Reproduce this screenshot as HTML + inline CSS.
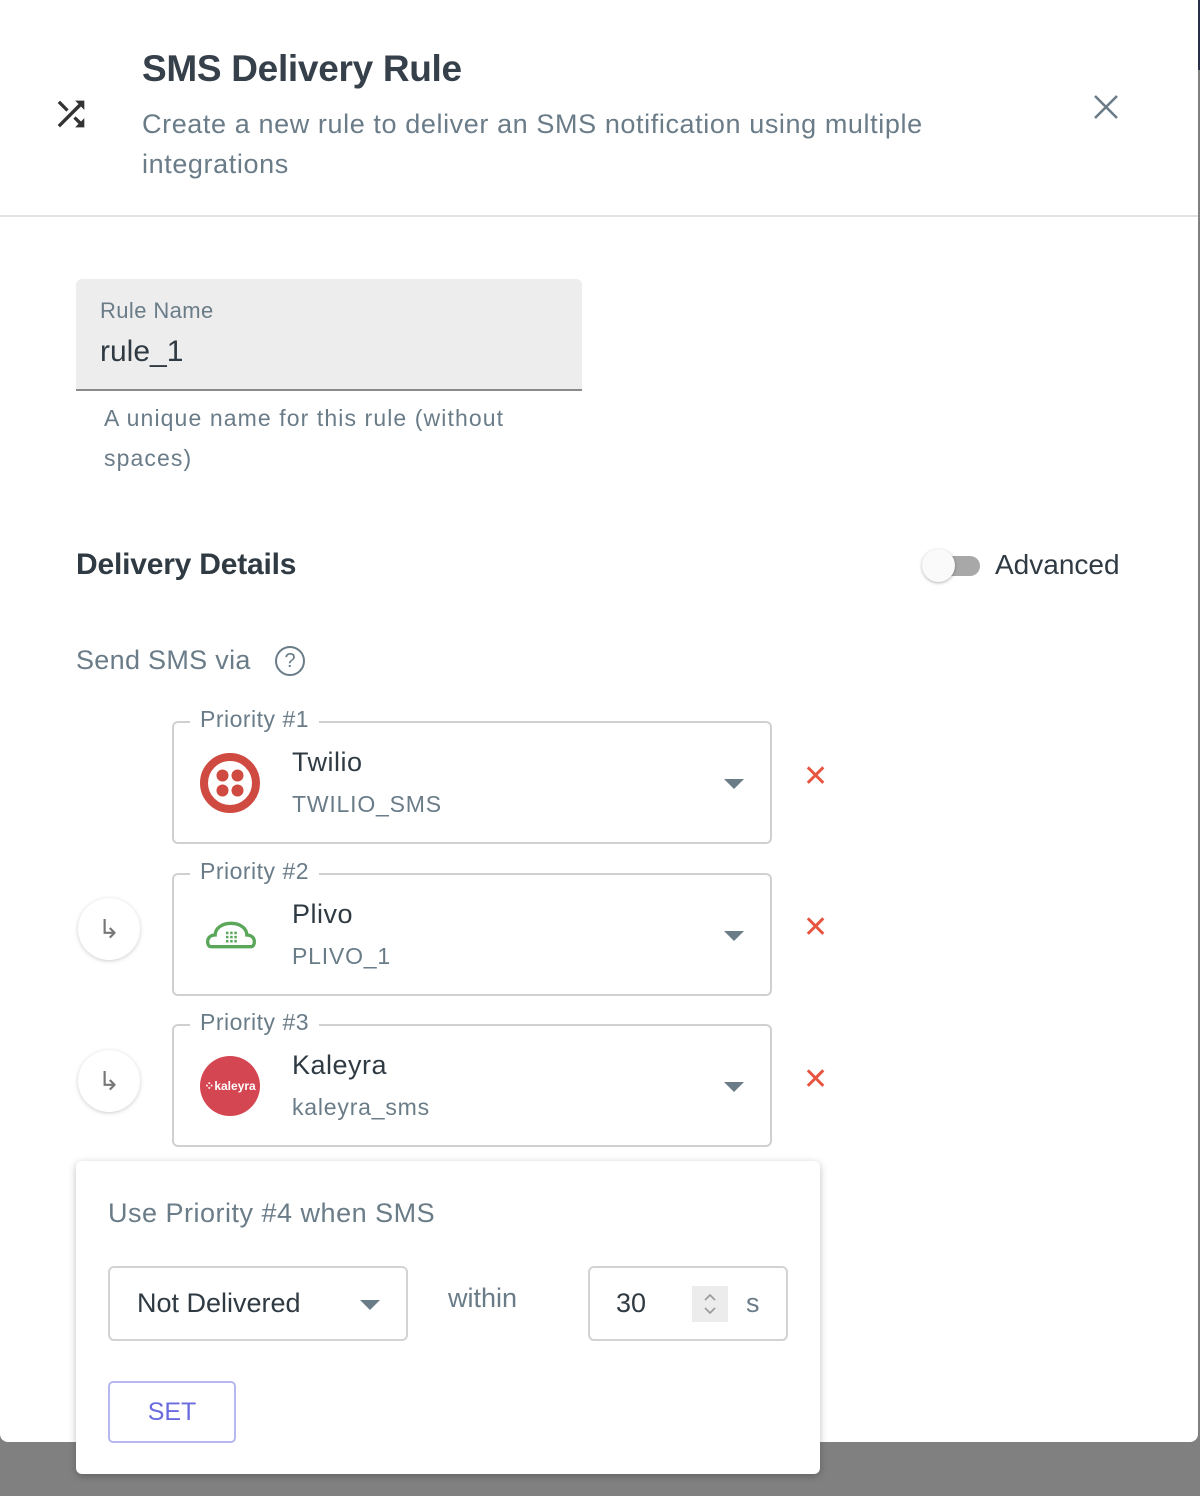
<!DOCTYPE html>
<html><head><style>
*{box-sizing:border-box;margin:0;padding:0}
body{width:1200px;height:1496px;background:#808080;font-family:"Liberation Sans",sans-serif;position:relative;overflow:hidden}
.dlg{position:absolute;left:0;top:0;width:1198px;height:1442px;background:#fff;border-radius:0 0 8px 8px}
.abs{position:absolute}
.hdr{border-bottom:2px solid #e3e3e3;height:217px;position:absolute;left:0;top:0;width:1198px}
.h1{left:142px;top:48px;font-size:37px;color:#36404a;font-weight:bold;letter-spacing:-0.3px}
.sub{left:142px;top:104px;font-size:27px;color:#6a7c88;line-height:40px;width:860px;letter-spacing:0.6px}
.field{left:76px;top:279px;width:506px;height:112px;background:#ededed;border-radius:6px 6px 0 0;border-bottom:2px solid #8a8a8a}
.prio{position:absolute;left:172px;width:600px;height:123px;border:2px solid #d0d0d0;border-radius:6px}
.prio .lg{position:absolute;left:26px;top:30px;width:60px;height:60px}
.prio .n{position:absolute;left:118px;top:24px;font-size:27px;color:#2f3a43;letter-spacing:0.5px}
.prio .c{position:absolute;left:118px;top:68px;font-size:23px;color:#6a7c88;letter-spacing:0.8px}
.prio .arr{position:absolute;right:26px;top:56px;width:0;height:0;border-left:10px solid transparent;border-right:10px solid transparent;border-top:10px solid #6a7c88}
.prio .lab{position:absolute;left:16px;top:-17px;background:#fff;padding:0 10px;font-size:23px;color:#6a7c88;letter-spacing:0.5px}
.x{position:absolute;left:803px;font-size:30px;color:#e8543f;line-height:30px}
.circ{position:absolute;left:78px;width:62px;height:62px;border-radius:50%;background:#fff;box-shadow:0 1px 4px rgba(0,0,0,.2);text-align:center;line-height:62px;font-size:26px;color:#777}
.pop{position:absolute;left:76px;top:1161px;width:744px;height:313px;background:#fff;border-radius:6px;box-shadow:0 2px 8px rgba(0,0,0,.25)}
</style></head><body>
<div class="abs" style="left:1198px;top:0;width:2px;height:70px;background:#2a2f4a"></div>
<div class="dlg">
<div class="hdr"></div>
<svg class="abs" style="left:51px;top:94px" width="40" height="40" viewBox="0 0 24 24"><path d="M10.6 9.2 5.4 4 4 5.4l5.2 5.2 1.4-1.4zM14.5 4l2 2L4 18.6 5.4 20 18 7.5l2 2V4h-5.5zm.3 9.4-1.4 1.4 3.1 3.1L14.5 20H20v-5.5l-2 2-3.2-3.1z" fill="#333"/></svg>
<div class="abs h1">SMS Delivery Rule</div>
<div class="abs sub">Create a new rule to deliver an SMS notification using multiple integrations</div>
<svg class="abs" style="left:1093px;top:94px" width="26" height="26" viewBox="0 0 26 26"><path d="M2 2L24 24M24 2L2 24" stroke="#6a7c88" stroke-width="2.6"/></svg>
<div class="abs field"><div class="abs" style="left:24px;top:19px;font-size:22px;color:#6a7c88;letter-spacing:0.4px">Rule Name</div><div class="abs" style="left:24px;top:56px;font-size:30px;color:#2f3a43">rule_1</div></div>
<div class="abs" style="left:104px;top:398px;font-size:23px;color:#6a7c88;line-height:40px;width:440px;letter-spacing:1.1px">A unique name for this rule (without spaces)</div>
<div class="abs" style="left:76px;top:548px;font-size:30px;color:#2f3a43;font-weight:bold;letter-spacing:-0.2px">Delivery Details</div>
<div class="abs" style="left:938px;top:556px;width:42px;height:20px;border-radius:10px;background:#a8a8a8"></div>
<div class="abs" style="left:922px;top:549px;width:33px;height:33px;border-radius:50%;background:#fafafa;box-shadow:0 1px 3px rgba(0,0,0,.3)"></div>
<div class="abs" style="left:995px;top:549px;font-size:28px;color:#2f3a43">Advanced</div>
<div class="abs" style="left:76px;top:645px;font-size:27px;color:#6a7c88;letter-spacing:0.3px">Send SMS via</div>
<div class="abs" style="left:275px;top:646px;width:30px;height:30px;border:2px solid #6a7c88;border-radius:50%;text-align:center;line-height:26px;font-size:20px;color:#6a7c88">?</div>

<div class="prio" style="top:721px"><div class="lab">Priority #1</div>
<svg class="lg" viewBox="0 0 60 60"><circle cx="30" cy="30" r="26" fill="none" stroke="#cf4a40" stroke-width="8"/><circle cx="22.5" cy="22.5" r="6" fill="#cf4a40"/><circle cx="37.5" cy="22.5" r="6" fill="#cf4a40"/><circle cx="22.5" cy="37.5" r="6" fill="#cf4a40"/><circle cx="37.5" cy="37.5" r="6" fill="#cf4a40"/></svg>
<div class="n">Twilio</div><div class="c">TWILIO_SMS</div><div class="arr"></div></div>
<div class="x" style="top:762px">✕</div>

<div class="circ" style="top:898px">↳</div>
<div class="prio" style="top:873px"><div class="lab">Priority #2</div>
<svg class="lg" viewBox="0 0 60 60" style="left:32px;width:50px"><path d="M6 44c-3 0-4-3-4-6 0-5 4-8 9-8 0-8 8-14 19-14s19 6 19 14c5 0 9 3 9 8 0 3-1 6-4 6z" fill="none" stroke="#5aa75a" stroke-width="4"/><g fill="#5aa75a"><rect x="24" y="26" width="3" height="3"/><rect x="29" y="26" width="3" height="3"/><rect x="34" y="26" width="3" height="3"/><rect x="24" y="31" width="3" height="3"/><rect x="29" y="31" width="3" height="3"/><rect x="34" y="31" width="3" height="3"/><rect x="24" y="36" width="3" height="3"/><rect x="29" y="36" width="3" height="3"/><rect x="34" y="36" width="3" height="3"/></g></svg>
<div class="n">Plivo</div><div class="c">PLIVO_1</div><div class="arr"></div></div>
<div class="x" style="top:913px">✕</div>

<div class="circ" style="top:1050px">↳</div>
<div class="prio" style="top:1024px"><div class="lab">Priority #3</div>
<svg class="lg" viewBox="0 0 60 60"><circle cx="30" cy="30" r="30" fill="#d44652"/><text x="30" y="34" font-size="12" font-weight="bold" fill="#fff" text-anchor="middle" font-family="Liberation Sans">⁘kaleyra</text></svg>
<div class="n">Kaleyra</div><div class="c">kaleyra_sms</div><div class="arr"></div></div>
<div class="x" style="top:1065px">✕</div>
</div>

<div class="pop">
<div class="abs" style="left:32px;top:37px;font-size:27px;color:#6a7c88;letter-spacing:0.5px">Use Priority #4 when SMS</div>
<div class="abs" style="left:32px;top:105px;width:300px;height:75px;border:2px solid #d3d3d3;border-radius:6px"><div class="abs" style="left:27px;top:20px;font-size:27px;color:#2f3a43">Not Delivered</div><div class="abs" style="left:250px;top:32px;border-left:10px solid transparent;border-right:10px solid transparent;border-top:10px solid #6a7c88"></div></div>
<div class="abs" style="left:372px;top:122px;font-size:27px;color:#6a7c88">within</div>
<div class="abs" style="left:512px;top:105px;width:200px;height:75px;border:2px solid #d3d3d3;border-radius:6px"><div class="abs" style="left:26px;top:20px;font-size:27px;color:#2f3a43">30</div><svg class="abs" style="left:102px;top:18px" width="36" height="36" viewBox="0 0 36 36"><rect width="36" height="36" fill="#ececec"/><path d="M13 14l5-5 5 5M13 22l5 5 5-5" fill="none" stroke="#999" stroke-width="1.6"/></svg><div class="abs" style="left:156px;top:20px;font-size:27px;color:#6a7c88">s</div></div>
<div class="abs" style="left:32px;top:220px;width:128px;height:62px;border:2px solid #b8b8f0;border-radius:5px;text-align:center;line-height:58px;font-size:25px;color:#6b6be0">SET</div>
</div>
</body></html>
